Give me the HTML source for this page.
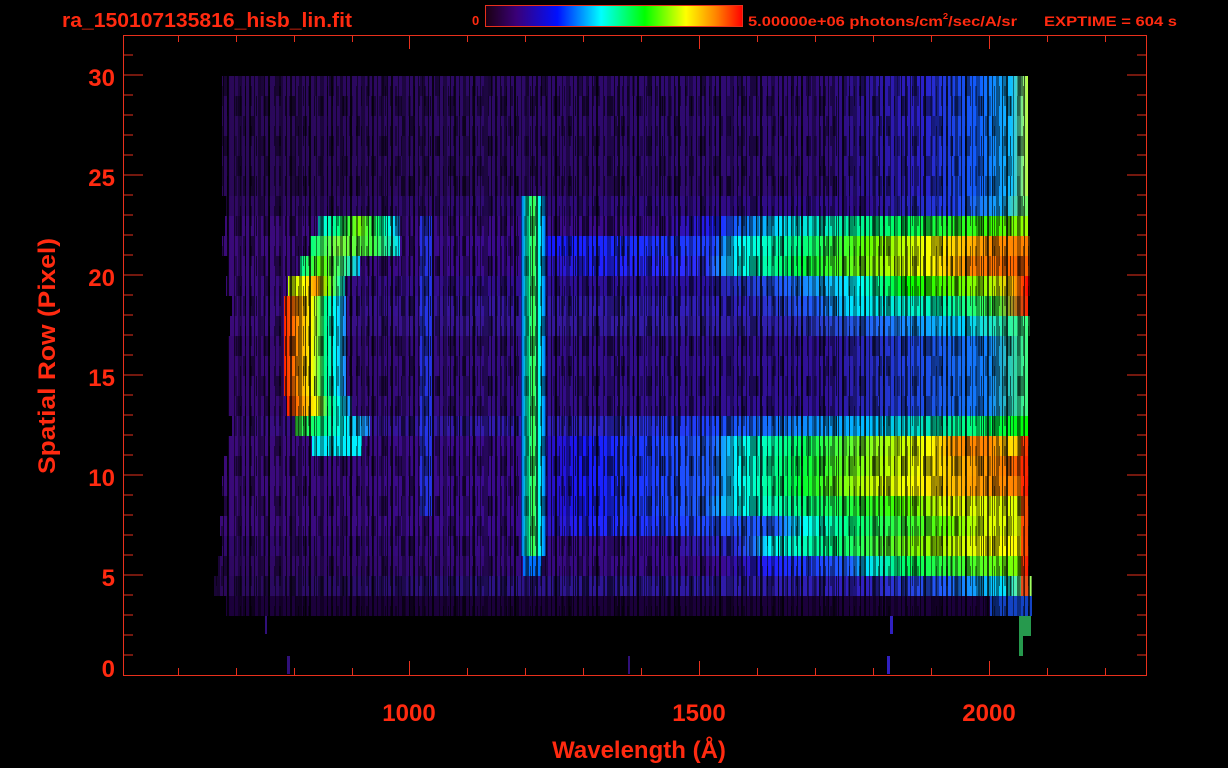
<!DOCTYPE html>
<html><head><meta charset="utf-8"><style>
html,body{margin:0;padding:0;background:#000;width:1228px;height:768px;overflow:hidden}
svg{display:block}
text{font-family:"Liberation Sans",sans-serif;font-weight:bold;fill:#ff2a10}
</style></head><body>
<svg width="1228" height="768" viewBox="0 0 1228 768" xmlns="http://www.w3.org/2000/svg">
<defs>
<linearGradient id="cb" x1="0" x2="1" y1="0" y2="0">
<stop offset="0" stop-color="#1a0010"/><stop offset=".12" stop-color="#3a0078"/><stop offset=".28" stop-color="#0010ff"/>
<stop offset=".45" stop-color="#00ffff"/><stop offset=".62" stop-color="#00ff00"/><stop offset=".78" stop-color="#ffff00"/>
<stop offset=".9" stop-color="#ff8000"/><stop offset="1" stop-color="#ff0000"/></linearGradient>
<linearGradient id="gTop" gradientUnits="userSpaceOnUse" x1="222" x2="1028"><stop offset="0" stop-color="#2a0858"/><stop offset=".75" stop-color="#300a78"/><stop offset=".87" stop-color="#2a20c8"/><stop offset=".94" stop-color="#1060ff"/><stop offset=".98" stop-color="#10c0ff"/><stop offset="1" stop-color="#c0ff40"/></linearGradient>
<linearGradient id="gA" gradientUnits="userSpaceOnUse" x1="222" x2="1028"><stop offset="0" stop-color="#2e0860"/><stop offset=".8" stop-color="#300c90"/><stop offset=".91" stop-color="#2040f0"/><stop offset=".97" stop-color="#10b0ff"/><stop offset="1" stop-color="#80ff60"/></linearGradient>
<linearGradient id="gB" gradientUnits="userSpaceOnUse" x1="222" x2="1028"><stop offset="0" stop-color="#3a0a78"/><stop offset=".55" stop-color="#3a0a90"/><stop offset=".613" stop-color="#2020ff"/><stop offset=".692" stop-color="#00e0ff"/><stop offset=".841" stop-color="#00ff60"/><stop offset=".96" stop-color="#40ff00"/><stop offset="1" stop-color="#a0ff00"/></linearGradient>
<linearGradient id="gC" gradientUnits="userSpaceOnUse" x1="222" x2="1028"><stop offset="0" stop-color="#3a0a78"/><stop offset=".37" stop-color="#3a0a90"/><stop offset=".40" stop-color="#1818ff"/><stop offset=".61" stop-color="#2040ff"/><stop offset=".64" stop-color="#00ffff"/><stop offset=".72" stop-color="#00ff80"/><stop offset=".80" stop-color="#60ff00"/><stop offset=".88" stop-color="#ffff00"/><stop offset=".95" stop-color="#ff9000"/><stop offset="1" stop-color="#ff8000"/></linearGradient>
<linearGradient id="gD" gradientUnits="userSpaceOnUse" x1="222" x2="1028"><stop offset="0" stop-color="#3a0a78"/><stop offset=".37" stop-color="#3a0a90"/><stop offset=".46" stop-color="#2020ff"/><stop offset=".60" stop-color="#3030ff"/><stop offset=".64" stop-color="#00ffff"/><stop offset=".72" stop-color="#00ff40"/><stop offset=".82" stop-color="#a0ff00"/><stop offset=".88" stop-color="#ffff00"/><stop offset=".93" stop-color="#ff8000"/><stop offset="1" stop-color="#ff6000"/></linearGradient>
<linearGradient id="gE" gradientUnits="userSpaceOnUse" x1="222" x2="1028"><stop offset="0" stop-color="#3a0a78"/><stop offset=".6" stop-color="#2a10a0"/><stop offset=".70" stop-color="#2060ff"/><stop offset=".79" stop-color="#00ffff"/><stop offset=".85" stop-color="#00ff00"/><stop offset=".95" stop-color="#a0ff00"/><stop offset=".98" stop-color="#ffc000"/><stop offset="1" stop-color="#ff0000"/></linearGradient>
<linearGradient id="gF" gradientUnits="userSpaceOnUse" x1="222" x2="1028"><stop offset="0" stop-color="#3a0a78"/><stop offset=".65" stop-color="#3020c0"/><stop offset=".74" stop-color="#2060ff"/><stop offset=".78" stop-color="#00e0ff"/><stop offset=".90" stop-color="#00ffb0"/><stop offset=".96" stop-color="#40ff40"/><stop offset="1" stop-color="#ff2000"/></linearGradient>
<linearGradient id="gG" gradientUnits="userSpaceOnUse" x1="222" x2="1028"><stop offset="0" stop-color="#3a0a78"/><stop offset=".7" stop-color="#3020b0"/><stop offset=".82" stop-color="#2070ff"/><stop offset=".92" stop-color="#00d0ff"/><stop offset="1" stop-color="#40ff80"/></linearGradient>
<linearGradient id="gH" gradientUnits="userSpaceOnUse" x1="222" x2="1028"><stop offset="0" stop-color="#36086e"/><stop offset=".75" stop-color="#30109a"/><stop offset=".85" stop-color="#2040e0"/><stop offset=".95" stop-color="#1080ff"/><stop offset="1" stop-color="#40ff80"/></linearGradient>
<linearGradient id="gL" gradientUnits="userSpaceOnUse" x1="222" x2="1028"><stop offset="0" stop-color="#3a0a78"/><stop offset=".45" stop-color="#3020c0"/><stop offset=".6" stop-color="#2040ff"/><stop offset=".81" stop-color="#00c0ff"/><stop offset=".93" stop-color="#00ff80"/><stop offset="1" stop-color="#00ff00"/></linearGradient>
<linearGradient id="gM" gradientUnits="userSpaceOnUse" x1="222" x2="1028"><stop offset="0" stop-color="#3a0a78"/><stop offset=".37" stop-color="#3a0a90"/><stop offset=".45" stop-color="#1818ff"/><stop offset=".61" stop-color="#2060ff"/><stop offset=".64" stop-color="#00ffff"/><stop offset=".72" stop-color="#00ff60"/><stop offset=".84" stop-color="#c0ff00"/><stop offset=".88" stop-color="#ffff00"/><stop offset=".91" stop-color="#ff9000"/><stop offset=".95" stop-color="#ff8000"/><stop offset=".98" stop-color="#ffe000"/><stop offset="1" stop-color="#ffa000"/></linearGradient>
<linearGradient id="gN" gradientUnits="userSpaceOnUse" x1="222" x2="1028"><stop offset="0" stop-color="#3a0a78"/><stop offset=".37" stop-color="#3a0a90"/><stop offset=".45" stop-color="#1818ff"/><stop offset=".61" stop-color="#2060ff"/><stop offset=".64" stop-color="#00ffff"/><stop offset=".72" stop-color="#00ff40"/><stop offset=".82" stop-color="#b0ff00"/><stop offset=".87" stop-color="#ffff00"/><stop offset=".92" stop-color="#ffb000"/><stop offset=".97" stop-color="#ff8000"/><stop offset="1" stop-color="#ff4000"/></linearGradient>
<linearGradient id="gO" gradientUnits="userSpaceOnUse" x1="222" x2="1028"><stop offset="0" stop-color="#3a0a78"/><stop offset=".37" stop-color="#3a0a90"/><stop offset=".45" stop-color="#1818ff"/><stop offset=".61" stop-color="#2060ff"/><stop offset=".64" stop-color="#00ffff"/><stop offset=".72" stop-color="#00ff30"/><stop offset=".80" stop-color="#c0ff00"/><stop offset=".86" stop-color="#ffff00"/><stop offset=".93" stop-color="#ffa000"/><stop offset=".99" stop-color="#ff8000"/><stop offset="1" stop-color="#ff0000"/></linearGradient>
<linearGradient id="gP" gradientUnits="userSpaceOnUse" x1="222" x2="1028"><stop offset="0" stop-color="#3a0a78"/><stop offset=".37" stop-color="#3a0a90"/><stop offset=".45" stop-color="#1818ff"/><stop offset=".6" stop-color="#2060ff"/><stop offset=".64" stop-color="#00ffff"/><stop offset=".72" stop-color="#00ff80"/><stop offset=".84" stop-color="#40ff00"/><stop offset=".90" stop-color="#e0ff00"/><stop offset="1" stop-color="#e0ff00"/></linearGradient>
<linearGradient id="gQ" gradientUnits="userSpaceOnUse" x1="222" x2="1028"><stop offset="0" stop-color="#3a0a78"/><stop offset=".37" stop-color="#3a0a90"/><stop offset=".45" stop-color="#2020ff"/><stop offset=".69" stop-color="#2060ff"/><stop offset=".72" stop-color="#00ffff"/><stop offset=".78" stop-color="#00ff80"/><stop offset=".90" stop-color="#60ff00"/><stop offset=".95" stop-color="#e0ff00"/><stop offset="1" stop-color="#e0ff00"/></linearGradient>
<linearGradient id="gR" gradientUnits="userSpaceOnUse" x1="222" x2="1028"><stop offset="0" stop-color="#30086a"/><stop offset=".55" stop-color="#3a0a90"/><stop offset=".64" stop-color="#2a30e0"/><stop offset=".66" stop-color="#2070ff"/><stop offset=".68" stop-color="#00ffff"/><stop offset=".76" stop-color="#00ff80"/><stop offset=".86" stop-color="#80ff00"/><stop offset=".95" stop-color="#ffff00"/><stop offset="1" stop-color="#ffff00"/></linearGradient>
<linearGradient id="gS" gradientUnits="userSpaceOnUse" x1="222" x2="1028"><stop offset="0" stop-color="#2e0860"/><stop offset=".62" stop-color="#3a0a90"/><stop offset=".68" stop-color="#2020ff"/><stop offset=".78" stop-color="#2060ff"/><stop offset=".80" stop-color="#00e0ff"/><stop offset=".85" stop-color="#00ff60"/><stop offset=".99" stop-color="#80ff00"/><stop offset="1" stop-color="#ff0000"/></linearGradient>
<linearGradient id="gT" gradientUnits="userSpaceOnUse" x1="222" x2="1028"><stop offset="0" stop-color="#2a0858"/><stop offset=".8" stop-color="#3020c0"/><stop offset=".9" stop-color="#2060ff"/><stop offset=".97" stop-color="#00e0ff"/><stop offset="1" stop-color="#a0ff60"/></linearGradient>

<linearGradient id="aB" x1="0" x2="1"><stop offset="0" stop-color="#00ffff"/><stop offset=".25" stop-color="#00ff80"/><stop offset=".5" stop-color="#80ff00"/><stop offset=".75" stop-color="#00ff80"/><stop offset=".9" stop-color="#00ffff"/><stop offset="1" stop-color="#2080ff"/></linearGradient>
<linearGradient id="aC" x1="0" x2="1"><stop offset="0" stop-color="#00ff80"/><stop offset=".3" stop-color="#80ff40"/><stop offset=".7" stop-color="#40ff40"/><stop offset="1" stop-color="#00e0ff"/></linearGradient>
<linearGradient id="aD" x1="0" x2="1"><stop offset="0" stop-color="#00ffa0"/><stop offset=".35" stop-color="#60ff00"/><stop offset=".7" stop-color="#40ff80"/><stop offset="1" stop-color="#00c0ff"/></linearGradient>
<linearGradient id="aE" x1="0" x2="1"><stop offset="0" stop-color="#c0ff00"/><stop offset=".3" stop-color="#ffff00"/><stop offset=".5" stop-color="#ff9000"/><stop offset=".7" stop-color="#80ff00"/><stop offset="1" stop-color="#00ffff"/></linearGradient>
<linearGradient id="aF" x1="0" x2="1"><stop offset="0" stop-color="#ff2000"/><stop offset=".25" stop-color="#ffa000"/><stop offset=".45" stop-color="#ffff00"/><stop offset=".65" stop-color="#00ff80"/><stop offset=".82" stop-color="#00ffff"/><stop offset="1" stop-color="#2080ff"/></linearGradient>
<linearGradient id="aL" x1="0" x2="1"><stop offset="0" stop-color="#40ff40"/><stop offset=".35" stop-color="#00ff80"/><stop offset=".65" stop-color="#00ffff"/><stop offset="1" stop-color="#2080ff"/></linearGradient>
<linearGradient id="ly" x1="0" x2="1"><stop offset="0" stop-color="#0060ff"/><stop offset=".25" stop-color="#00ffc0"/><stop offset=".5" stop-color="#40ff40"/><stop offset=".75" stop-color="#00ffff"/><stop offset="1" stop-color="#0060ff"/></linearGradient>

<pattern id="n1" width="41" height="20" patternUnits="userSpaceOnUse" x="3" y="76">
<rect x="0" width="2" height="20" fill="#000" opacity=".7"/><rect x="5" width="1" height="20" fill="#000" opacity=".6"/>
<rect x="9" width="3" height="20" fill="#000" opacity=".45"/><rect x="15" width="1" height="20" fill="#000" opacity=".7"/>
<rect x="19" width="2" height="20" fill="#000" opacity=".8"/><rect x="26" width="1" height="20" fill="#000" opacity=".5"/>
<rect x="30" width="4" height="20" fill="#000" opacity=".35"/><rect x="37" width="1" height="20" fill="#000" opacity=".7"/>
</pattern>
<pattern id="n2" width="29" height="40" patternUnits="userSpaceOnUse" x="11" y="86">
<rect x="2" width="1" height="20" fill="#000" opacity=".5"/><rect x="7" width="2" height="20" fill="#000" opacity=".4"/>
<rect x="13" y="10" width="1" height="20" fill="#000" opacity=".6"/><rect x="20" y="10" width="3" height="20" fill="#000" opacity=".3"/>
<rect x="26" width="1" height="30" fill="#000" opacity=".5"/>
</pattern>
<pattern id="n3" width="53" height="60" patternUnits="userSpaceOnUse" x="7" y="76">
<rect x="4" width="5" height="20" fill="#000" opacity=".45"/><rect x="17" y="20" width="6" height="20" fill="#000" opacity=".4"/>
<rect x="31" y="40" width="4" height="20" fill="#000" opacity=".5"/><rect x="42" width="3" height="20" fill="#000" opacity=".35"/>
<rect x="46" y="20" width="5" height="20" fill="#000" opacity=".4"/><rect x="24" y="40" width="3" height="20" fill="#000" opacity=".4"/>
</pattern>
</defs>

<rect width="1228" height="768" fill="#000"/>

<g>
<rect x="222" y="76" width="806" height="120" fill="url(#gTop)"/>
<rect x="226" y="196" width="802" height="20" fill="url(#gA)"/>
<rect x="225" y="216" width="803" height="20" fill="url(#gB)"/>
<rect x="222" y="236" width="808" height="20" fill="url(#gC)"/>
<rect x="228" y="256" width="802" height="20" fill="url(#gD)"/>
<rect x="226" y="276" width="804" height="20" fill="url(#gE)"/>
<rect x="232" y="296" width="796" height="20" fill="url(#gF)"/>
<rect x="230" y="316" width="800" height="20" fill="url(#gG)"/>
<rect x="228" y="336" width="800" height="80" fill="url(#gH)"/>
<rect x="232" y="416" width="796" height="20" fill="url(#gL)"/>
<rect x="228" y="436" width="800" height="20" fill="url(#gM)"/>
<rect x="224" y="456" width="804" height="20" fill="url(#gN)"/>
<rect x="222" y="476" width="806" height="20" fill="url(#gO)"/>
<rect x="224" y="496" width="804" height="20" fill="url(#gP)"/>
<rect x="220" y="516" width="808" height="20" fill="url(#gQ)"/>
<rect x="222" y="536" width="806" height="20" fill="url(#gR)"/>
<rect x="218" y="556" width="810" height="20" fill="url(#gS)"/>
<rect x="214" y="576" width="818" height="20" fill="url(#gT)"/>
<rect x="226" y="596" width="806" height="20" fill="#22004a" opacity=".8"/>
<rect x="990" y="596" width="42" height="20" fill="#1060ff" opacity=".7"/>
</g>
<rect x="420" y="216" width="12" height="300" fill="#2040ff" opacity=".75"/>
<rect x="318" y="216" width="82" height="20" fill="url(#aB)"/>
<rect x="310" y="236" width="90" height="20" fill="url(#aC)"/>
<rect x="300" y="256" width="60" height="20" fill="url(#aD)"/>
<rect x="288" y="276" width="57" height="20" fill="url(#aE)"/>
<rect x="284" y="296" width="62" height="100" fill="url(#aF)"/>
<rect x="287" y="396" width="65" height="20" fill="url(#aF)"/>
<rect x="295" y="416" width="75" height="20" fill="url(#aL)"/>
<rect x="312" y="436" width="50" height="20" fill="#00f0ff"/>
<rect x="521" y="196" width="25" height="360" fill="url(#ly)"/>
<rect x="523" y="556" width="19" height="20" fill="#0070ff"/>
<rect x="1021" y="436" width="8" height="160" fill="#ff2000" opacity=".8"/>
<rect x="212" y="76" width="826" height="540" fill="url(#n1)"/>
<rect x="212" y="76" width="826" height="540" fill="url(#n2)"/>
<rect x="212" y="76" width="826" height="540" fill="url(#n3)"/>
<rect x="1019" y="616" width="12" height="20" fill="#40ff80" opacity=".6"/>
<rect x="1019" y="636" width="4" height="20" fill="#40ff80" opacity=".6"/>
<rect x="890" y="616" width="3" height="18" fill="#3020c0"/>
<rect x="265" y="616" width="2" height="18" fill="#30107a"/>
<rect x="287" y="656" width="3" height="18" fill="#30107a"/>
<rect x="887" y="656" width="3" height="18" fill="#3020c0"/>
<rect x="628" y="656" width="2" height="18" fill="#30107a"/>

<g stroke="#e8301c" stroke-width="1" fill="none">
<rect x="123.5" y="35.5" width="1023" height="640"/>
<path d="M123 75h20M123 175h20M123 275h20M123 375h20M123 475h20M123 575h20M1147 75h-20M1147 175h-20M1147 275h-20M1147 375h-20M1147 475h-20M1147 575h-20"/>
<path d="M123 55h10M123 95h10M123 115h10M123 135h10M123 155h10M123 195h10M123 215h10M123 235h10M123 255h10M123 295h10M123 315h10M123 335h10M123 355h10M123 395h10M123 415h10M123 435h10M123 455h10M123 495h10M123 515h10M123 535h10M123 555h10M123 595h10M123 615h10M123 635h10M123 655h10"/>
<path d="M1147 55h-10M1147 95h-10M1147 115h-10M1147 135h-10M1147 155h-10M1147 195h-10M1147 215h-10M1147 235h-10M1147 255h-10M1147 295h-10M1147 315h-10M1147 335h-10M1147 355h-10M1147 395h-10M1147 415h-10M1147 435h-10M1147 455h-10M1147 495h-10M1147 515h-10M1147 535h-10M1147 555h-10M1147 595h-10M1147 615h-10M1147 635h-10M1147 655h-10"/>
<path d="M409.5 675v-14M699.5 675v-14M989.5 675v-14M409.5 35v14M699.5 35v14M989.5 35v14"/>
<path d="M178.5 675v-7M236.5 675v-7M294.5 675v-7M352.5 675v-7M467.5 675v-7M525.5 675v-7M583.5 675v-7M641.5 675v-7M757.5 675v-7M815.5 675v-7M873.5 675v-7M931.5 675v-7M1047.5 675v-7M1105.5 675v-7"/>
<path d="M178.5 35v7M236.5 35v7M294.5 35v7M352.5 35v7M467.5 35v7M525.5 35v7M583.5 35v7M641.5 35v7M757.5 35v7M815.5 35v7M873.5 35v7M931.5 35v7M1047.5 35v7M1105.5 35v7"/>
</g>

<g font-size="24" text-anchor="end">
<text x="115" y="86">30</text><text x="115" y="186">25</text><text x="115" y="286">20</text>
<text x="115" y="386">15</text><text x="115" y="486">10</text><text x="115" y="586">5</text><text x="115" y="677">0</text>
</g>
<g font-size="24" text-anchor="middle">
<text x="409" y="721">1000</text><text x="699" y="721">1500</text><text x="989" y="721">2000</text>
<text x="639" y="758">Wavelength (Å)</text>
<text x="0" y="0" transform="translate(55,356) rotate(-90)" textLength="236" lengthAdjust="spacingAndGlyphs">Spatial Row (Pixel)</text>
</g>

<text x="62" y="27" font-size="20" textLength="290" lengthAdjust="spacingAndGlyphs">ra_150107135816_hisb_lin.fit</text>
<text x="472" y="25" font-size="13">0</text>
<rect x="485.5" y="5.5" width="257" height="21" fill="url(#cb)" stroke="#e8301c"/>
<text x="748" y="26" font-size="14" textLength="269" lengthAdjust="spacingAndGlyphs">5.00000e+06 photons/cm<tspan font-size="8" dy="-7">2</tspan><tspan dy="7">/sec/A/sr</tspan></text>
<text x="1044" y="26" font-size="14" textLength="133" lengthAdjust="spacingAndGlyphs">EXPTIME = 604 s</text>
</svg>
</body></html>
